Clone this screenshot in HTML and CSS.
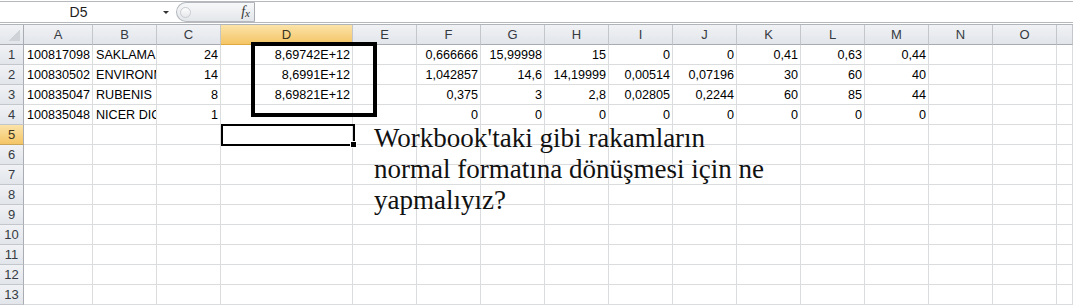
FILE: index.html
```html
<!DOCTYPE html>
<html lang="tr">
<head>
<meta charset="utf-8">
<title>Excel</title>
<link rel="stylesheet" href="styles.css">
</head>
<body>
<div class="formula-bar">
  <div class="name-box"><span class="name">D5</span><span class="dd"></span></div>
  <div class="grip"><span class="knob"></span><span class="fx">f<span class="x">x</span></span></div>
  <div class="formula-input"></div>
</div>
<div class="sheet">
  <div class="row head"><b class="corner"><i></i></b><b>A</b><b>B</b><b>C</b><b class="sel">D</b><b>E</b><b>F</b><b>G</b><b>H</b><b>I</b><b>J</b><b>K</b><b>L</b><b>M</b><b>N</b><b>O</b><b></b></div>
  <div class="row"><b>1</b><span class="l">100817098</span><span class="l">SAKLAMA KABI</span><span>24</span><span>8,69742E+12</span><span></span><span>0,666666</span><span>15,99998</span><span>15</span><span>0</span><span>0</span><span>0,41</span><span>0,63</span><span>0,44</span><span></span><span></span><span></span></div>
  <div class="row"><b>2</b><span class="l">100830502</span><span class="l">ENVIRONMENT</span><span>14</span><span>8,6991E+12</span><span></span><span>1,042857</span><span>14,6</span><span>14,19999</span><span>0,00514</span><span>0,07196</span><span>30</span><span>60</span><span>40</span><span></span><span></span><span></span></div>
  <div class="row"><b>3</b><span class="l">100835047</span><span class="l">RUBENIS SET</span><span>8</span><span>8,69821E+12</span><span></span><span>0,375</span><span>3</span><span>2,8</span><span>0,02805</span><span>0,2244</span><span>60</span><span>85</span><span>44</span><span></span><span></span><span></span></div>
  <div class="row"><b>4</b><span class="l">100835048</span><span class="l">NICER DICER</span><span>1</span><span></span><span></span><span>0</span><span>0</span><span>0</span><span>0</span><span>0</span><span>0</span><span>0</span><span>0</span><span></span><span></span><span></span></div>
  <div class="row"><b class="sel">5</b><span></span><span></span><span></span><span></span><span></span><span></span><span></span><span></span><span></span><span></span><span></span><span></span><span></span><span></span><span></span><span></span></div>
  <div class="row"><b>6</b><span></span><span></span><span></span><span></span><span></span><span></span><span></span><span></span><span></span><span></span><span></span><span></span><span></span><span></span><span></span><span></span></div>
  <div class="row"><b>7</b><span></span><span></span><span></span><span></span><span></span><span></span><span></span><span></span><span></span><span></span><span></span><span></span><span></span><span></span><span></span><span></span></div>
  <div class="row"><b>8</b><span></span><span></span><span></span><span></span><span></span><span></span><span></span><span></span><span></span><span></span><span></span><span></span><span></span><span></span><span></span><span></span></div>
  <div class="row"><b>9</b><span></span><span></span><span></span><span></span><span></span><span></span><span></span><span></span><span></span><span></span><span></span><span></span><span></span><span></span><span></span><span></span></div>
  <div class="row"><b>10</b><span></span><span></span><span></span><span></span><span></span><span></span><span></span><span></span><span></span><span></span><span></span><span></span><span></span><span></span><span></span><span></span></div>
  <div class="row"><b>11</b><span></span><span></span><span></span><span></span><span></span><span></span><span></span><span></span><span></span><span></span><span></span><span></span><span></span><span></span><span></span><span></span></div>
  <div class="row"><b>12</b><span></span><span></span><span></span><span></span><span></span><span></span><span></span><span></span><span></span><span></span><span></span><span></span><span></span><span></span><span></span><span></span></div>
  <div class="row"><b>13</b><span></span><span></span><span></span><span></span><span></span><span></span><span></span><span></span><span></span><span></span><span></span><span></span><span></span><span></span><span></span><span></span></div>
</div>
<div class="frame"></div>
<div class="selection"><i class="handle"></i></div>
<div class="note">Workbook'taki gibi rakamların<br>normal formatına dönüşmesi için ne<br>yapmalıyız?</div>
</body>
</html>
```

FILE: styles.css
```css
html, body {
  margin: 0;
  padding: 0;
}
body {
  width: 1073px;
  height: 306px;
  overflow: hidden;
  position: relative;
  background: #fff;
  font-family: "Liberation Sans", Arial, sans-serif;
  color: #000;
}

/* formula bar */
.formula-bar {
  display: flex;
  height: 20px;
  margin-top: 1px;
  margin-bottom: 1px;
  border-top: 1px solid #b5b9be;
  border-bottom: 1px solid #b5b9be;
}
.name-box {
  width: 176px;
  display: flex;
  align-items: center;
  flex: none;
}
.name {
  width: 157px;
  text-align: center;
  font-size: 14px;
  color: #1e1e1e;
}
.dd {
  width: 0;
  height: 0;
  border-left: 3px solid transparent;
  border-right: 3px solid transparent;
  border-top: 3px solid #333;
  margin-left: 6px;
}
.grip {
  width: 79px;
  flex: none;
  box-sizing: border-box;
  border: 1px solid #b5b9be;
  border-right-color: #a9adb3;
  border-radius: 10px 0 0 10px;
  background: linear-gradient(#f7f8f9, #e3e6ea);
  display: flex;
  align-items: center;
  justify-content: space-between;
  padding: 0 4px 0 3px;
}
.knob {
  width: 9px;
  height: 9px;
  border-radius: 50%;
  border: 1px solid #c8ccd1;
  background: linear-gradient(#fdfdfd, #e6e8eb);
}
.fx {
  font-family: "Liberation Serif", "Times New Roman", serif;
  font-style: italic;
  font-size: 14px;
  color: #333;
  line-height: 1;
}
.fx .x {
  font-size: 11px;
  position: relative;
  top: 1px;
}
.formula-input {
  flex: 1;
  background: #fff;
}

/* sheet grid */
.sheet {
  border-top: 1px solid #b1b5ba;
}
.row {
  display: grid;
  grid-template-columns: 24px 69px 64px 64px 132px repeat(11, 64px) 1fr;
  height: 20px;
}
.row > * {
  box-sizing: border-box;
  border-right: 1px solid #dadcdd;
  border-bottom: 1px solid #dadcdd;
  font-weight: normal;
  font-size: 12.6px;
  line-height: 20px;
  white-space: nowrap;
  overflow: hidden;
  text-align: right;
  padding: 0 2px 0 3px;
}
.row > .l {
  text-align: left;
  padding: 0 0 0 3px;
}
.row > b {
  background: linear-gradient(#f0f2f5, #e2e5ea);
  border-right: 1px solid #a9adb3;
  border-bottom: 1px solid #c3c7cc;
  text-align: center;
  color: #363b42;
  font-size: 13px;
  padding: 0;
}
.head > b {
  border-right: 1px solid #c3c7cc;
  border-bottom: 1px solid #a9adb3;
}
.head > b.corner {
  border-right: 1px solid #a9adb3;
  position: relative;
}
.corner i {
  position: absolute;
  right: 3px;
  bottom: 3px;
  width: 11px;
  height: 11px;
  background: linear-gradient(135deg, transparent 50%, #cfd3d8 50%);
}
.row > b.sel {
  background: linear-gradient(#fbe3a9, #f4c565);
  color: #3a3420;
  border-bottom-color: #c9a55a;
}
.head > b.sel {
  border-bottom: 1px solid #e0a93c;
}

/* overlays */
.frame {
  position: absolute;
  left: 251px;
  top: 42px;
  width: 126px;
  height: 75px;
  border: 4px solid #000;
  box-sizing: border-box;
}
.selection {
  position: absolute;
  left: 221px;
  top: 124px;
  width: 134px;
  height: 22px;
  border: 2px solid #000;
  box-sizing: border-box;
}
.handle {
  position: absolute;
  right: -4px;
  bottom: -4px;
  width: 5px;
  height: 5px;
  background: #000;
  border: 1px solid #fff;
}
.note {
  position: absolute;
  left: 374px;
  top: 123px;
  font-family: "Liberation Serif", "Times New Roman", serif;
  font-size: 27px;
  line-height: 31px;
  color: #111;
  white-space: nowrap;
}
```
